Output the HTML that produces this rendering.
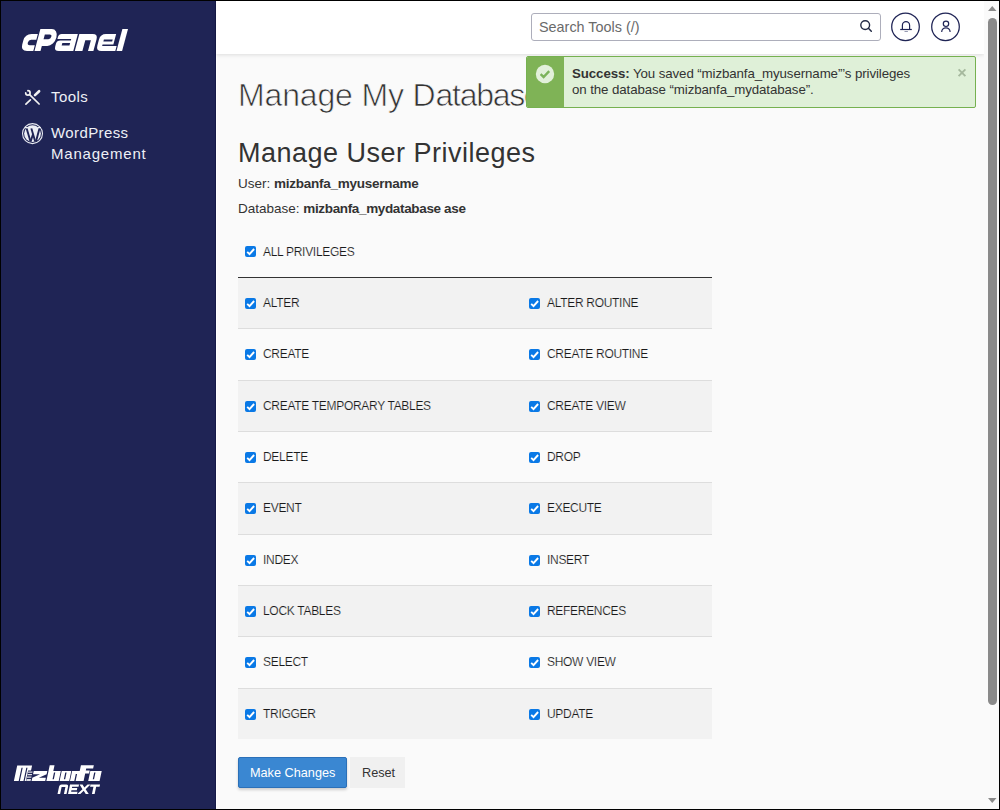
<!DOCTYPE html>
<html><head><meta charset="utf-8">
<style>
*{box-sizing:border-box;margin:0;padding:0}
html,body{width:1000px;height:810px;overflow:hidden;background:#000;font-family:"Liberation Sans",sans-serif}
.a{position:absolute}
#side{left:1px;top:1px;width:215px;height:808px;background:#1f2455}
#hdr{left:216px;top:1px;width:768px;height:53px;background:#fff;box-shadow:0 1px 4px rgba(0,0,0,.12);z-index:2}
#content{left:216px;top:54px;width:768px;height:755px;background:#fafafa}
#sb{left:984px;top:1px;width:15px;height:808px;background:#fafafa;z-index:3}
.t{white-space:nowrap;line-height:1}
.nav{color:#eef0f6;font-size:15px;left:50px}
.chk{width:11px;height:11px;background:#0a79e6;border-radius:2px}
.chk svg{position:absolute;left:0;top:0}
.lbl{font-size:12.0px;letter-spacing:-0.3px;color:#1a1a1a;-webkit-text-stroke:0.15px #fafafa}
.row{left:238px;width:474px;border-top:1px solid #ddd}
.g{background:#f2f2f2}
</style></head><body>
<div id="side" class="a">
  <svg class="a" style="left:-1px;top:-1px" width="216" height="200" viewBox="0 0 216 200">
    <g fill="#fff" transform="translate(13.66,0) skewX(-15)">
      <path d="M33.3,34 H27 Q20.5,34 20.5,40.5 V44.5 Q20.5,51 27,51 H33.3 V45.3 H28.2 Q25.6,45.3 25.6,42.6 Q25.6,39.8 28.2,39.8 H33.3 Z"/>
      <path fill-rule="evenodd" d="M34.5,51 V29 H46 A6.8,8.5 0 0 1 46,46 H40.5 V51 Z M40.4,34.4 H45.2 A2.3,2.4 0 0 1 45.2,39.2 H40.4 Z"/>
      <path d="M54.2,39 V37 Q54.2,34 57.2,34 H73.3 V51 H58.8 Q54,51 54,46.5 V43.5 Q54,40.4 57.5,40.4 H68 V39 Z M60.2,43 V45.6 H68 V43 Z" fill-rule="evenodd"/>
      <path d="M74.8,51 V34 H88.2 Q93.4,34 93.4,39.2 V51 H88 V40.2 H82.4 V51 Z"/>
      <path fill-rule="evenodd" d="M115.3,51 H101.4 Q95.9,51 95.9,45.5 V39.5 Q95.9,34 101.4,34 H111.6 V44.4 H100.8 V46 H115.3 Z M100.8,39.4 H109.6 V41.4 H100.8 Z"/>
      <path d="M116.5,51 V29 H122.1 V51 Z"/>
    </g>
  </svg>
  <svg class="a" style="left:-1px;top:-1px" width="60" height="120" viewBox="0 0 60 120">
    <g stroke="#f2f2f2" fill="none" stroke-linecap="round">
      <path d="M27.9,90.7 A2.2,2.2 0 1 1 25.7,92.9" stroke-width="1.7"/>
      <path d="M29.6,94.6 L39.1,104" stroke-width="1.7"/>
      <path d="M25.9,104.1 L30.4,99.9" stroke-width="1.7"/>
      <path d="M35,95.1 L39.1,91.2" stroke-width="2.6"/>
    </g>
  </svg>
  <div class="a t nav" style="top:88px;letter-spacing:0.45px">Tools</div>
  <svg class="a" style="left:-1px;top:-1px" width="60" height="160" viewBox="0 0 60 160">
    <circle cx="32.5" cy="133.6" r="10" fill="none" stroke="#e6e8f0" stroke-width="1.1"/>
    <circle cx="32.5" cy="133.6" r="8.4" fill="#eceef4"/>
    <g stroke="#1f2455" stroke-width="1.9" fill="none">
      <path d="M26.6,128.3 L30.5,141.6"/>
      <path d="M31.3,128.3 L35.2,141.6"/>
      <path d="M39.6,128 L36,141.4"/>
      <path d="M30.5,141.6 L33,134.4"/>
    </g>
    <path d="M25,127.6 H29.6 M30,127.6 H34.3 M37.8,127.6 H41" stroke="#eceef4" stroke-width="1.2"/>
  </svg>
  <div class="a t nav" style="top:124px;letter-spacing:0.4px">WordPress</div>
  <div class="a t nav" style="top:145px;letter-spacing:0.8px">Management</div>
  <svg class="a" style="left:-1px;top:-1px" width="216" height="810" viewBox="0 0 216 810">
    <g fill="#fff" transform="translate(166.0,0) skewX(-12)">
      <path fill-rule="evenodd" d="M13.9,781 V765.4 H28.8 V770.5 H25.9 V781 H24.7 V767.8 H23.5 V781 Z M18.7,767.8 H19.9 V781 H18.7 Z"/>
      <path d="M26.2,771.5 H30.6 V772.8 H26.2 Z M26.2,774 H30.6 V775.3 H26.2 Z M26.2,776.5 H30.6 V777.8 H26.2 Z M26.2,779 H30.6 V781 H26.2 Z" opacity="0.85"/>
      <path d="M31.6,771 H45.2 V774.2 L38.2,777.8 H45.2 V781 H31.6 V777.8 L38.6,774.2 H31.6 Z"/>
      <path fill-rule="evenodd" d="M46.4,781 V765.3 H51.2 V771 H58.7 V781 Z M52.2,772.6 H53.5 V779.3 H52.2 Z"/>
      <path fill-rule="evenodd" d="M59.6,771 H69.2 V781 H59.6 Z M63.5,772.6 H64.8 V779.3 H63.5 Z"/>
      <path d="M70,781 V771 H79.6 V781 H75.6 V774 H74.3 V781 Z"/>
      <path d="M77.6,781 V765.3 H90.5 V768.6 H83.6 V770.6 H87.5 V773.6 H83.6 V781 Z"/>
      <path fill-rule="evenodd" d="M88.2,771 H99.6 V781 H88.2 Z M92.4,772.6 H93.7 V779.3 H92.4 Z"/>
    </g>
    <g fill="#fff" transform="translate(168.8,0) skewX(-12)">
      <path d="M57.5,794 V786.6 Q57.5,784.5 59.6,784.5 H64.4 Q66.5,784.5 66.5,786.6 V794 H63.9 V787 H60.1 V794 Z"/>
      <path d="M68,784.5 H77 V786.8 H70.6 V788.1 H76 V790.3 H70.6 V791.7 H77 V794 H68 Z"/>
      <path d="M77.5,784.5 H80.5 L83,787.6 L85.5,784.5 H88.5 L84.6,789.2 L88.7,794 H85.7 L83,790.8 L80.3,794 H77.3 L81.4,789.2 Z"/>
      <path d="M88.5,784.5 H98 V786.8 H94.6 V794 H91.9 V786.8 H88.5 Z"/>
    </g>
  </svg>
</div>
<div id="content" class="a"></div>
<div class="a" style="left:216px;top:54px;width:1px;height:755px;background:#fff;z-index:1"></div>
<div class="a" style="left:215px;top:1px;width:1px;height:808px;background:#161a48;z-index:1"></div>
<div id="hdr" class="a">
  <div class="a" style="left:315px;top:12px;width:350px;height:28px;border:1px solid #adaebb;border-radius:3px;background:#fff"></div>
  <div class="a t" style="left:323px;top:19px;font-size:14.4px;color:#6a6a6a">Search Tools (/)</div>
  <svg class="a" style="left:640px;top:15px" width="20" height="20" viewBox="0 0 20 20">
    <circle cx="9.2" cy="9.1" r="4.4" fill="none" stroke="#232a45" stroke-width="1.4"/>
    <path d="M12.4,12.3 L15.3,15.3" stroke="#232a45" stroke-width="1.5" stroke-linecap="round"/>
  </svg>
  <svg class="a" style="left:674px;top:11px" width="32" height="32" viewBox="0 0 32 32">
    <circle cx="15.5" cy="14.8" r="13.8" fill="#fff" stroke="#1f2455" stroke-width="1.25"/>
    <path d="M12.4,17.5 V13.2 A3.6,3.6 0 0 1 19.6,13.2 V17.5" fill="none" stroke="#1f2455" stroke-width="1.2"/>
    <path d="M10.2,17.5 H21.8" stroke="#1f2455" stroke-width="1.2"/>
    <path d="M14.5,19.5 H17.9" stroke="#8a8fa8" stroke-width="0.9"/>
  </svg>
  <svg class="a" style="left:714px;top:11px" width="32" height="32" viewBox="0 0 32 32">
    <circle cx="15.5" cy="14.8" r="13.8" fill="#fff" stroke="#1f2455" stroke-width="1.25"/>
    <circle cx="16" cy="11.8" r="2.7" fill="none" stroke="#1f2455" stroke-width="1.2"/>
    <path d="M11.7,20 A4.2,4.2 0 0 1 20.1,20" fill="none" stroke="#1f2455" stroke-width="1.2"/>
  </svg>
</div>
<div id="main" class="a" style="left:0;top:0;width:1000px;height:810px;z-index:1"><div class="a t" style="left:238px;top:79px;font-size:32px;letter-spacing:-0.15px;color:#333;-webkit-text-stroke:0.7px #fafafa">Manage My D<span style="letter-spacing:-1.3px">atabases</span></div>
<div class="a t" style="left:238px;top:140px;font-size:27px;letter-spacing:0.5px;color:#333">Manage User Privileges</div>
<div class="a t" style="left:238px;top:177px;font-size:13.5px;color:#333">User: <b style="letter-spacing:-0.25px">mizbanfa_myusername</b></div>
<div class="a t" style="left:238px;top:202px;font-size:13.5px;color:#333">Database: <b style="letter-spacing:-0.35px">mizbanfa_mydatabase ase</b></div>
<div class="a chk" style="left:245px;top:246px"><svg width="11" height="11" viewBox="0 0 11 11"><path d="M2.2,5.9 L4.5,8.1 L9.1,3.0" fill="none" stroke="#fff" stroke-width="1.9"/></svg></div>
<div class="a t lbl" style="left:263px;top:246px">ALL PRIVILEGES</div>
<div class="a row g" style="top:277.000px;height:51.333px;border-top:1px solid #333"></div>
<div class="a chk" style="left:245px;top:298.00px"><svg width="11" height="11" viewBox="0 0 11 11"><path d="M2.2,5.9 L4.5,8.1 L9.1,3.0" fill="none" stroke="#fff" stroke-width="1.9"/></svg></div>
<div class="a t lbl" style="left:263px;top:297.00px;-webkit-text-stroke-color:#f2f2f2">ALTER</div>
<div class="a chk" style="left:529px;top:298.00px"><svg width="11" height="11" viewBox="0 0 11 11"><path d="M2.2,5.9 L4.5,8.1 L9.1,3.0" fill="none" stroke="#fff" stroke-width="1.9"/></svg></div>
<div class="a t lbl" style="left:547px;top:297.00px;-webkit-text-stroke-color:#f2f2f2">ALTER ROUTINE</div>
<div class="a row" style="top:328.333px;height:51.333px"></div>
<div class="a chk" style="left:245px;top:349.33px"><svg width="11" height="11" viewBox="0 0 11 11"><path d="M2.2,5.9 L4.5,8.1 L9.1,3.0" fill="none" stroke="#fff" stroke-width="1.9"/></svg></div>
<div class="a t lbl" style="left:263px;top:348.33px">CREATE</div>
<div class="a chk" style="left:529px;top:349.33px"><svg width="11" height="11" viewBox="0 0 11 11"><path d="M2.2,5.9 L4.5,8.1 L9.1,3.0" fill="none" stroke="#fff" stroke-width="1.9"/></svg></div>
<div class="a t lbl" style="left:547px;top:348.33px">CREATE ROUTINE</div>
<div class="a row g" style="top:379.666px;height:51.333px"></div>
<div class="a chk" style="left:245px;top:400.67px"><svg width="11" height="11" viewBox="0 0 11 11"><path d="M2.2,5.9 L4.5,8.1 L9.1,3.0" fill="none" stroke="#fff" stroke-width="1.9"/></svg></div>
<div class="a t lbl" style="left:263px;top:399.67px;-webkit-text-stroke-color:#f2f2f2">CREATE TEMPORARY TABLES</div>
<div class="a chk" style="left:529px;top:400.67px"><svg width="11" height="11" viewBox="0 0 11 11"><path d="M2.2,5.9 L4.5,8.1 L9.1,3.0" fill="none" stroke="#fff" stroke-width="1.9"/></svg></div>
<div class="a t lbl" style="left:547px;top:399.67px;-webkit-text-stroke-color:#f2f2f2">CREATE VIEW</div>
<div class="a row" style="top:430.999px;height:51.333px"></div>
<div class="a chk" style="left:245px;top:452.00px"><svg width="11" height="11" viewBox="0 0 11 11"><path d="M2.2,5.9 L4.5,8.1 L9.1,3.0" fill="none" stroke="#fff" stroke-width="1.9"/></svg></div>
<div class="a t lbl" style="left:263px;top:451.00px">DELETE</div>
<div class="a chk" style="left:529px;top:452.00px"><svg width="11" height="11" viewBox="0 0 11 11"><path d="M2.2,5.9 L4.5,8.1 L9.1,3.0" fill="none" stroke="#fff" stroke-width="1.9"/></svg></div>
<div class="a t lbl" style="left:547px;top:451.00px">DROP</div>
<div class="a row g" style="top:482.332px;height:51.333px"></div>
<div class="a chk" style="left:245px;top:503.33px"><svg width="11" height="11" viewBox="0 0 11 11"><path d="M2.2,5.9 L4.5,8.1 L9.1,3.0" fill="none" stroke="#fff" stroke-width="1.9"/></svg></div>
<div class="a t lbl" style="left:263px;top:502.33px;-webkit-text-stroke-color:#f2f2f2">EVENT</div>
<div class="a chk" style="left:529px;top:503.33px"><svg width="11" height="11" viewBox="0 0 11 11"><path d="M2.2,5.9 L4.5,8.1 L9.1,3.0" fill="none" stroke="#fff" stroke-width="1.9"/></svg></div>
<div class="a t lbl" style="left:547px;top:502.33px;-webkit-text-stroke-color:#f2f2f2">EXECUTE</div>
<div class="a row" style="top:533.665px;height:51.333px"></div>
<div class="a chk" style="left:245px;top:554.66px"><svg width="11" height="11" viewBox="0 0 11 11"><path d="M2.2,5.9 L4.5,8.1 L9.1,3.0" fill="none" stroke="#fff" stroke-width="1.9"/></svg></div>
<div class="a t lbl" style="left:263px;top:553.66px">INDEX</div>
<div class="a chk" style="left:529px;top:554.66px"><svg width="11" height="11" viewBox="0 0 11 11"><path d="M2.2,5.9 L4.5,8.1 L9.1,3.0" fill="none" stroke="#fff" stroke-width="1.9"/></svg></div>
<div class="a t lbl" style="left:547px;top:553.66px">INSERT</div>
<div class="a row g" style="top:584.998px;height:51.333px"></div>
<div class="a chk" style="left:245px;top:606.00px"><svg width="11" height="11" viewBox="0 0 11 11"><path d="M2.2,5.9 L4.5,8.1 L9.1,3.0" fill="none" stroke="#fff" stroke-width="1.9"/></svg></div>
<div class="a t lbl" style="left:263px;top:605.00px;-webkit-text-stroke-color:#f2f2f2">LOCK TABLES</div>
<div class="a chk" style="left:529px;top:606.00px"><svg width="11" height="11" viewBox="0 0 11 11"><path d="M2.2,5.9 L4.5,8.1 L9.1,3.0" fill="none" stroke="#fff" stroke-width="1.9"/></svg></div>
<div class="a t lbl" style="left:547px;top:605.00px;-webkit-text-stroke-color:#f2f2f2">REFERENCES</div>
<div class="a row" style="top:636.331px;height:51.333px"></div>
<div class="a chk" style="left:245px;top:657.33px"><svg width="11" height="11" viewBox="0 0 11 11"><path d="M2.2,5.9 L4.5,8.1 L9.1,3.0" fill="none" stroke="#fff" stroke-width="1.9"/></svg></div>
<div class="a t lbl" style="left:263px;top:656.33px">SELECT</div>
<div class="a chk" style="left:529px;top:657.33px"><svg width="11" height="11" viewBox="0 0 11 11"><path d="M2.2,5.9 L4.5,8.1 L9.1,3.0" fill="none" stroke="#fff" stroke-width="1.9"/></svg></div>
<div class="a t lbl" style="left:547px;top:656.33px">SHOW VIEW</div>
<div class="a row g" style="top:687.664px;height:51.333px"></div>
<div class="a chk" style="left:245px;top:708.66px"><svg width="11" height="11" viewBox="0 0 11 11"><path d="M2.2,5.9 L4.5,8.1 L9.1,3.0" fill="none" stroke="#fff" stroke-width="1.9"/></svg></div>
<div class="a t lbl" style="left:263px;top:707.66px;-webkit-text-stroke-color:#f2f2f2">TRIGGER</div>
<div class="a chk" style="left:529px;top:708.66px"><svg width="11" height="11" viewBox="0 0 11 11"><path d="M2.2,5.9 L4.5,8.1 L9.1,3.0" fill="none" stroke="#fff" stroke-width="1.9"/></svg></div>
<div class="a t lbl" style="left:547px;top:707.66px;-webkit-text-stroke-color:#f2f2f2">UPDATE</div>
<div class="a" style="left:238px;top:757px;width:109px;height:31px;background:#3a87d2;border:1px solid #2b70b8;border-radius:2px;box-shadow:0 2px 3px rgba(0,0,0,.18)"></div>
<div class="a t" style="left:250px;top:767px;font-size:12.7px;color:#fff">Make Changes</div>
<div class="a" style="left:350px;top:757px;width:55px;height:31px;background:#f0f0f0"></div>
<div class="a t" style="left:362px;top:767px;font-size:12.7px;color:#333">Reset</div></div>
<div class="a" style="left:526px;top:56px;width:450px;height:52px;border:1px solid #76b150;border-radius:2px;background:#dff0d8;z-index:4;overflow:hidden">
  <div class="a" style="left:0;top:0;width:37px;height:50px;background:#7fb356"></div>
  <svg class="a" style="left:8px;top:7px" width="20" height="20" viewBox="0 0 20 20">
    <circle cx="10" cy="10" r="9.2" fill="#e2f0da"/>
    <path d="M5.6,10.2 L8.6,13 L14.2,7.2" fill="none" stroke="#7cb35b" stroke-width="2.4"/>
  </svg>
  <div class="a t" style="left:45px;top:9px;font-size:13.3px;letter-spacing:-0.1px;color:#333;line-height:16px"><b>Success:</b> You saved “mizbanfa_myusername”’s privileges<br>on the database “mizbanfa_mydatabase”.</div>
  <svg class="a" style="left:429.5px;top:11px" width="12" height="12" viewBox="0 0 12 12"><path d="M1.6,1.4 L8.4,8.2 M8.4,1.4 L1.6,8.2" stroke="#a6b99e" stroke-width="1.9"/></svg>
</div>
<div id="sb" class="a">
  <svg class="a" style="left:0;top:0" width="15" height="808" viewBox="0 0 15 808">
    <path d="M4,10 L12.5,10 L8.25,5 Z" fill="#8a8a8a"/>
    <rect x="4" y="17" width="9" height="687" rx="4.5" fill="#8a8a8a"/>
    <path d="M4,797 L12.5,797 L8.25,802 Z" fill="#8a8a8a"/>
  </svg>
</div>
</body></html>
